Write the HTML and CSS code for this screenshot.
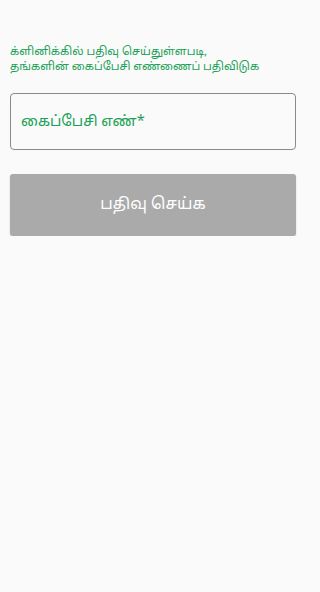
FILE: index.html
```html
<!DOCTYPE html>
<html lang="ta">
<head>
<meta charset="utf-8">
<link rel="stylesheet" href="styles.css">
</head>
<body>
<main class="screen">
  <p class="hint">க்ளினிக்கில் பதிவு செய்துள்ளபடி,<br>தங்களின் கைப்பேசி எண்ணைப் பதிவிடுக</p>
  <div class="field"><span class="placeholder">கைப்பேசி எண்*</span></div>
  <button class="submit">பதிவு செய்க</button>
</main>
</body>
</html>
```
FILE: styles.css
```css
html, body {
  margin: 0;
  padding: 0;
  background: #fafafa;
  font-family: "Noto Sans Tamil UI", "Noto Sans Tamil", "Noto Sans", Roboto, sans-serif;
}
.screen {
  display: flex;
  flex-direction: column;
  padding: 45px 10px 0 10px;
  width: 286px;
}
.hint {
  margin: 0;
  font-size: 11.2px;
  line-height: 15px;
  color: #1aa157;
}
.field {
  margin-top: 18px;
  height: 55px;
  border: 1px solid #8a8a8a;
  border-radius: 4px;
  display: flex;
  align-items: center;
  padding-left: 10px;
}
.placeholder {
  font-size: 14.6px;
  color: #1aa157;
}
.submit {
  margin-top: 24px;
  height: 62px;
  border: none;
  border-radius: 3px;
  background: #aaaaaa;
  color: #ffffff;
  font-family: inherit;
  font-size: 16px;
  box-shadow: 0 1px 2px rgba(0,0,0,0.15);
}
```
